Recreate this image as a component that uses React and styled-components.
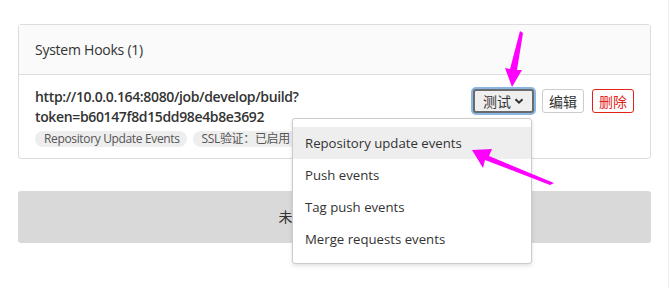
import React from "react";
import styled, { createGlobalStyle } from "styled-components";

const Global = createGlobalStyle`
  body {
    margin: 0;
    background: #fff;
    font-family: "Open Sans", "Noto Sans CJK SC", sans-serif;
    color: #333;
  }
`;

export default function App() {
  return (
    <Page>
      <Global />
      <Panel>
        <PanelHeader>System Hooks (1)</PanelHeader>
        <PanelBody>
          <HookInfo>
            <HookUrl>
              http://10.0.0.164:8080/job/develop/build?
              <br />
              token=b60147f8d15dd98e4b8e3692
            </HookUrl>
            <Badges>
              <Badge>Repository Update Events</Badge>
              <Badge>SSL验证：已启用</Badge>
            </Badges>
          </HookInfo>
          <Actions>
            <DropWrap>
              <Button $focused>
                测试 <Caret viewBox="0 0 10 10"><path d="M1.5 3.2 L5 6.7 L8.5 3.2" /></Caret>
              </Button>
              <Menu>
                <MenuItem $active>Repository update events</MenuItem>
                <MenuItem>Push events</MenuItem>
                <MenuItem>Tag push events</MenuItem>
                <MenuItem>Merge requests events</MenuItem>
              </Menu>
            </DropWrap>
            <Button>编辑</Button>
            <Button $danger>删除</Button>
          </Actions>
        </PanelBody>
      </Panel>
      <Empty>未执行过测试请求</Empty>
      <Arrows width="670" height="288" viewBox="0 0 670 288">
        <polygon points="520,31 523,33 517,70 522,70 512,87 505,68 510,69" fill="#f0f" />
        <polygon points="472,150 492,149 489,156 554,183 550,185 485,160 483,168" fill="#f0f" />
      </Arrows>
    </Page>
  );
}

const Page = styled.div`
  position: relative;
  width: 669px;
  height: 288px;
  padding: 24px 17px 0 18px;
  box-sizing: border-box;
  border-right: 1px solid #eee;
`;

const Panel = styled.div`
  border: 1px solid #ddd;
  border-radius: 3px;
  background: #fff;
`;

const PanelHeader = styled.div`
  height: 49px;
  line-height: 49px;
  padding: 0 16px;
  background: #fafafa;
  border-bottom: 1px solid #ddd;
  font-size: 14px;
  letter-spacing: -0.25px;
`;

const PanelBody = styled.div`
  display: flex;
  justify-content: space-between;
  align-items: flex-start;
  padding: 12px 16px 11px 16px;
`;

const HookInfo = styled.div`
  display: flex;
  flex-direction: column;
`;

const HookUrl = styled.div`
  font-size: 14px;
  font-weight: 600;
  line-height: 20px;
  letter-spacing: -0.36px;
`;

const Badges = styled.div`
  display: flex;
  gap: 6px;
  margin-top: 4px;
`;

const Badge = styled.span`
  display: inline-block;
  padding: 0 7px 0 9px;
  height: 16px;
  line-height: 16px;
  border-radius: 8px;
  background: #eee;
  color: #555;
  font-size: 12px;
  letter-spacing: -0.35px;
`;

const Actions = styled.div`
  display: flex;
  gap: 8px;
  padding-top: 2px;
`;

const DropWrap = styled.div`
  position: relative;
`;

const Button = styled.button`
  display: inline-flex;
  align-items: center;
  gap: 3px;
  height: 24px;
  padding: 0 ${(p) => (p.$focused ? "8px" : "6px")};
  font-family: inherit;
  font-size: 14px;
  border-radius: 3px;
  cursor: pointer;
  background: ${(p) => (p.$focused ? "#efefef" : "#fff")};
  color: ${(p) => (p.$danger ? "#e2231a" : "#333")};
  border: ${(p) =>
    p.$focused ? "2px solid #6b6b6b" : p.$danger ? "1px solid #e2231a" : "1px solid #ccc"};
  box-shadow: ${(p) => (p.$focused ? "0 0 0 2px #8ab6e3" : "none")};
`;

const Caret = styled.svg`
  width: 10px;
  height: 10px;
  fill: none;
  stroke: #333;
  stroke-width: 2;
`;

const Menu = styled.div`
  position: absolute;
  top: 29px;
  right: 2px;
  width: 238px;
  padding: 8px 0;
  background: #fff;
  border: 1px solid #ccc;
  border-radius: 3px;
  box-shadow: 0 2px 4px rgba(0, 0, 0, 0.12);
  z-index: 2;
`;

const MenuItem = styled.div`
  height: 32px;
  line-height: 32px;
  padding: 0 12px;
  font-size: 13.2px;
  color: #333;
  background: ${(p) => (p.$active ? "#eee" : "transparent")};
`;

const Empty = styled.div`
  margin-top: 32px;
  height: 52px;
  line-height: 52px;
  text-align: center;
  background: #d9d9d9;
  border-radius: 3px;
  font-size: 14px;
  color: #333;
`;

const Arrows = styled.svg`
  position: absolute;
  left: 0;
  top: 0;
  pointer-events: none;
  z-index: 3;
`;
